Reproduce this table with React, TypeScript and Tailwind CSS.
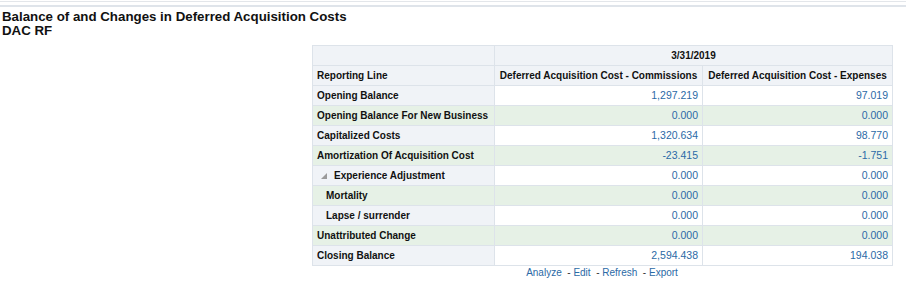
import React from "react";

type Row = {
  label: string;
  commissions: string;
  expenses: string;
  indent?: number;
  expander?: boolean;
  shaded?: boolean;
};

const rows: Row[] = [
  { label: "Opening Balance", commissions: "1,297.219", expenses: "97.019" },
  { label: "Opening Balance For New Business", commissions: "0.000", expenses: "0.000", shaded: true },
  { label: "Capitalized Costs", commissions: "1,320.634", expenses: "98.770" },
  { label: "Amortization Of Acquisition Cost", commissions: "-23.415", expenses: "-1.751", shaded: true },
  { label: "Experience Adjustment", commissions: "0.000", expenses: "0.000", expander: true },
  { label: "Mortality", commissions: "0.000", expenses: "0.000", indent: 1, shaded: true },
  { label: "Lapse / surrender", commissions: "0.000", expenses: "0.000", indent: 1 },
  { label: "Unattributed Change", commissions: "0.000", expenses: "0.000", shaded: true },
  { label: "Closing Balance", commissions: "2,594.438", expenses: "194.038" },
];

const cell = "h-[20px] border border-[#dde3ea] px-[4px] leading-none overflow-hidden";

const App: React.FC = () => {
  return (
    <div className="w-[906px] h-[281px] bg-white font-['Liberation_Sans',Arial,sans-serif] text-[#111] overflow-hidden">
      {/* top rules */}
      <div className="h-[1px] mt-[1px] bg-[#e3e6ea]" />
      <div className="h-[2px] mt-[3px] bg-[#dfe4ea]" />

      {/* Title */}
      <div className="px-[2px] pt-[3px] text-[13.3px] leading-[14px] font-bold">
        <div>Balance of and Changes in Deferred Acquisition Costs</div>
        <div>DAC RF</div>
      </div>

      {/* Pivot table + links */}
      <div className="ml-[312px] w-[580px] mt-[7px]">
        <table className="table-fixed border-collapse w-[580px] text-[10px]">
          <colgroup>
            <col className="w-[182px]" />
            <col className="w-[208px]" />
            <col className="w-[190px]" />
          </colgroup>
          <thead>
            <tr className="bg-[#f0f3f7]">
              <th className={cell} />
              <th colSpan={2} className={`${cell} font-bold text-center`}>
                3/31/2019
              </th>
            </tr>
            <tr className="bg-[#f0f3f7]">
              <th className={`${cell} text-left font-bold`}>Reporting Line</th>
              <th className={`${cell} font-bold text-center whitespace-nowrap`}>
                Deferred Acquisition Cost - Commissions
              </th>
              <th className={`${cell} font-bold text-center whitespace-nowrap`}>
                Deferred Acquisition Cost - Expenses
              </th>
            </tr>
          </thead>
          <tbody>
            {rows.map((r) => (
              <tr key={r.label} className={r.shaded ? "bg-[#e6f1e6]" : "bg-white"}>
                <td
                  className={`${cell} font-bold whitespace-nowrap ${
                    r.shaded ? "bg-[#e6f1e6]" : "bg-[#f0f3f7]"
                  }`}
                >
                  <div
                    className={`flex items-center ${
                      r.indent ? "pl-[9px]" : r.expander ? "pl-[4px]" : ""
                    }`}
                  >
                    {r.expander && (
                      <svg width="6" height="6" viewBox="0 0 6 6" className="mr-[7px]">
                        <polygon points="6,0 6,6 0,6" fill="#9a9a9a" />
                      </svg>
                    )}
                    {r.label}
                  </div>
                </td>
                <td className={`${cell} text-right text-[10.5px] text-[#2b6aa6]`}>{r.commissions}</td>
                <td className={`${cell} text-right text-[10.5px] text-[#2b6aa6]`}>{r.expenses}</td>
              </tr>
            ))}
          </tbody>
        </table>

        {/* Links */}
        <div className="mt-[1px] text-center text-[10px] leading-[12px] text-[#2b6aa6]">
          <span>Analyze</span>
          <span className="text-[#333]"> &nbsp;-</span> <span>Edit</span>
          <span className="text-[#333]"> &nbsp;-</span> <span>Refresh</span>
          <span className="text-[#333]"> &nbsp;-</span> <span>Export</span>
        </div>
      </div>

      <div className="h-[1px] mt-[2px] bg-[#dfe4ea]" />
    </div>
  );
};

export default App;
